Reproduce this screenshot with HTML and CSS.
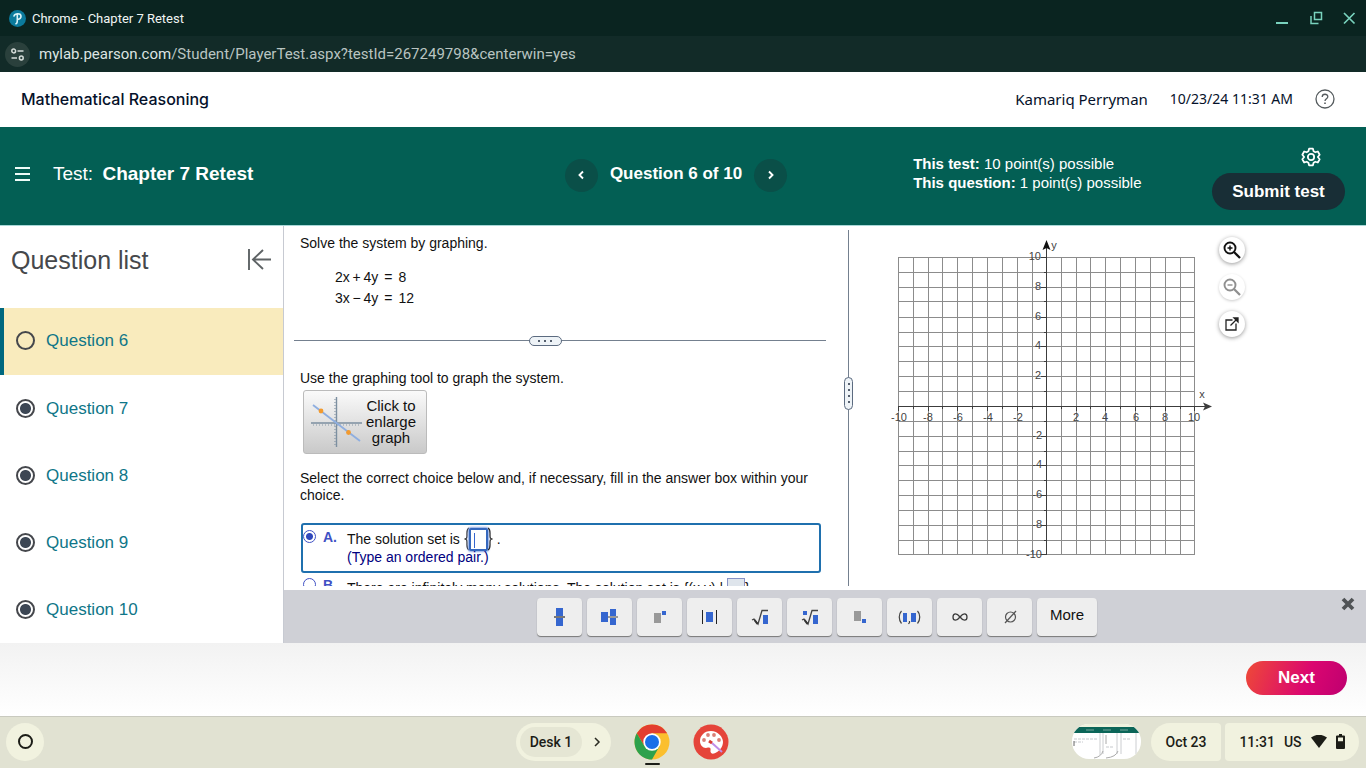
FILE: index.html
```html
<!DOCTYPE html>
<html lang="en">
<head>
<meta charset="utf-8">
<meta name="viewport" content="width=device-width, initial-scale=1">
<title>Chapter 7 Retest</title>
<link rel="stylesheet" href="styles.css">
</head>
<body>
<div class="titlebar">
  <svg width="17" height="17" viewBox="0 0 17 17" aria-hidden="true"><circle cx="8.500" cy="8.500" r="8.500" fill="#0b7a9c"/><path d="M5 6C6 3 12 3 12 6.300c0 2.200-1.500 3-3.500 3.200M8.300 4.500v6c0 2-.3 3-1.300 3.300" fill="none" stroke="#d9f2f7" stroke-width="1.600" stroke-linecap="round"/></svg>
  <span class="window-title">Chrome - Chapter 7 Retest</span>
  <div class="window-buttons">
    <button type="button" aria-label="Minimize"><svg width="14" height="14" viewBox="0 0 14 14"><path d="M0 12h12" stroke="#79d2bd" stroke-width="2"/></svg></button>
    <button type="button" aria-label="Restore"><svg width="14" height="14" viewBox="0 0 14 14" fill="none" stroke="#79d2bd" stroke-width="1.500"><path d="M5.500 1.500h7v7h-7zM2 5v7.500h7.500"/></svg></button>
    <button type="button" aria-label="Close window"><svg width="14" height="14" viewBox="0 0 14 14"><path d="M2 2l10.500 10.500M12.500 2L2 12.500" stroke="#79d2bd" stroke-width="1.700"/></svg></button>
  </div>
</div>
<div class="urlbar">
  <button type="button" class="site-info" aria-label="Site information"><svg width="13" height="13" viewBox="0 0 13 13" fill="none" stroke="#d5dcd9" stroke-width="1.500"><circle cx="2.700" cy="3" r="1.900"/><path d="M6.500 3H12.500M.5 10H6"/><circle cx="10.300" cy="10" r="1.900"/></svg></button>
  <span class="url"><span class="host">mylab.pearson.com</span>/Student/PlayerTest.aspx?testId=267249798&amp;centerwin=yes</span>
</div>

<header class="course-bar">
  <h1>Mathematical Reasoning</h1>
  <span class="student">Kamariq Perryman</span>
  <span class="timestamp">10/23/24 11:31 AM</span>
  <button type="button" class="help" aria-label="Help"><svg width="20" height="20" viewBox="0 0 20 20" fill="none" stroke="#555b5e" stroke-width="1.300"><circle cx="10" cy="10" r="9"/><path d="M7.200 8C7.200 4.300 12.800 4.500 12.800 7.700c0 2-2.800 2.200-2.800 4.300"/><path d="M10 13.500v1.500" stroke-width="1.600"/></svg></button>
</header>

<section class="test-bar">
  <div class="test-name">
    <button type="button" class="menu" aria-label="Menu"><svg width="15" height="14" viewBox="0 0 15 14"><path d="M0 1h15M0 7h15M0 13h15" stroke="#eefcf8" stroke-width="2"/></svg></button>
    <p>Test: <strong>Chapter 7 Retest</strong></p>
  </div>
  <nav class="pager">
    <button type="button" aria-label="Previous question"><svg width="8" height="10" viewBox="0 0 8 10"><path d="M6 1.500L2.500 5 6 8.500" fill="none" stroke="#fff" stroke-width="1.900"/></svg></button>
    <strong>Question 6 of 10</strong>
    <button type="button" aria-label="Next question"><svg width="8" height="10" viewBox="0 0 8 10"><path d="M2 1.500L5.500 5 2 8.500" fill="none" stroke="#fff" stroke-width="1.900"/></svg></button>
  </nav>
  <div class="test-side">
    <p class="points"><strong>This test:</strong> 10 point(s) possible<br><strong>This question:</strong> 1 point(s) possible</p>
    <div class="test-actions">
      <button type="button" class="gear" aria-label="Settings"><svg width="20" height="20" viewBox="0 0 24 24" fill="none" stroke="#fff" stroke-width="2.100" stroke-linejoin="round"><path d="M9.700 2h4.600l.8 3.100 2.100 1.200 3-.9 2.200 3.900L20.200 12l2.200 2.700-2.200 3.900-3-.9-2.100 1.200-.8 3.100H9.700l-.8-3.100-2.100-1.200-3 .9-2.200-3.900L3.800 12 1.600 9.300l2.200-3.900 3 .9 2.100-1.200z"/><circle cx="12" cy="12" r="3.800"/></svg></button>
      <button type="button" class="submit">Submit test</button>
    </div>
  </div>
</section>

<main class="player">
  <aside class="question-list">
    <div class="list-head">
      <h2>Question list</h2>
      <button type="button" aria-label="Collapse question list"><svg width="24" height="22" viewBox="0 0 24 22" fill="none" stroke="#5e6365" stroke-width="1.900"><path d="M2 0v21M24 10.500H6M16 1L6 10.500 16 20"/></svg></button>
    </div>
    <ul>
      <li class="current"><i class="status"></i><a href="#q6">Question 6</a></li>
      <li><i class="status seen"></i><a href="#q7">Question 7</a></li>
      <li><i class="status seen"></i><a href="#q8">Question 8</a></li>
      <li><i class="status seen"></i><a href="#q9">Question 9</a></li>
      <li><i class="status seen"></i><a href="#q10">Question 10</a></li>
    </ul>
  </aside>

  <div class="workspace">
    <div class="panes">
      <article class="problem">
        <p>Solve the system by graphing.</p>
        <div class="equations">
          <span>2x&thinsp;+&thinsp;4y</span><span>=</span><span>8</span>
          <span>3x&thinsp;&minus;&thinsp;4y</span><span>=</span><span>12</span>
        </div>
        <div class="divider"><button type="button" aria-label="Resize"><i></i><i></i><i></i></button></div>
        <p>Use the graphing tool to graph the system.</p>
        <button type="button" class="enlarge">
          <svg width="51" height="50" viewBox="0 0 51 50" aria-hidden="true"><path d="M0 26h51M25.500 0v50" stroke="#7c8fa0" stroke-width="1.400"/><path d="M2 28h48M24 2v47" stroke="#8797a6" stroke-width="1.200" stroke-dasharray="1 2"/><path d="M2 8l47 36" stroke="#8eaee0" stroke-width="1.800"/><circle cx="10" cy="14" r="2.400" fill="#f29a2e"/><circle cx="37.500" cy="35.500" r="2.400" fill="#f29a2e"/></svg>
          <span>Click to<br>enlarge<br>graph</span>
        </button>
        <p class="instruction">Select the correct choice below and, if necessary, fill in the answer box within your choice.</p>
        <div class="choice selected">
          <input type="radio" name="choice" id="choice-a" checked>
          <label class="letter" for="choice-a">A.</label>
          <div class="choice-text">
            <p class="answer-line">The solution set is <span class="set"><svg width="5" height="24" viewBox="0 0 5 24" fill="none" stroke="#222" stroke-width="1.200"><path d="M5 1C2.500 2 3 5 3 8s0 3.500-2.500 4C3 12.500 3 13 3 16s-.5 6 2 7"/></svg><input type="text" class="answer" aria-label="Solution set"><svg width="5" height="24" viewBox="0 0 5 24" fill="none" stroke="#222" stroke-width="1.200"><path d="M0 1c2.500 1 2 4 2 7s0 3.500 2.500 4C2 12.500 2 13 2 16s.5 6-2 7"/></svg></span><span>.</span></p>
            <p class="hint">(Type an ordered pair.)</p>
          </div>
        </div>
        <div class="choice">
          <input type="radio" name="choice" id="choice-b">
          <label class="letter" for="choice-b">B.</label>
          <p class="choice-text second">There are infinitely many solutions. The solution set is {(x,y) | <input type="text" class="pending" aria-label="Equation">}.</p>
        </div>
      </article>

      <div class="splitter"><button type="button" aria-label="Resize panes"><i></i><i></i><i></i><i></i></button></div>

      <section class="graph">
        <svg class="plane" width="339" height="330" viewBox="0 0 339 330" role="img" aria-label="Coordinate plane">
          <path shape-rendering="crispEdges" fill="none" stroke="#8c8c8c" d="M18.500 23V321M33.500 23V321M48.500 23V321M62.500 23V321M77.500 23V321M92.500 23V321M107.500 23V321M122.500 23V321M137.500 23V321M152.500 23V321M181.500 23V321M196.500 23V321M210.500 23V321M225.500 23V321M240.500 23V321M255.500 23V321M270.500 23V321M285.500 23V321M300.500 23V321M314.500 23V321M18 23.500H315M18 38.500H315M18 53.500H315M18 67.500H315M18 83.500H315M18 98.500H315M18 112.500H315M18 127.500H315M18 142.500H315M18 157.500H315M18 187.500H315M18 202.500H315M18 217.500H315M18 231.500H315M18 246.500H315M18 261.500H315M18 276.500H315M18 291.500H315M18 306.500H315M18 320.500H315"/>
          <g stroke="#3c3c3c" fill="none" shape-rendering="crispEdges">
            <path d="M166.500 14V321M18 172.500H326"/>
            <path d="M18.500 172v5M33.500 172v3M48.500 172v5M62.500 172v3M77.500 172v5M92.500 172v3M107.500 172v5M122.500 172v3M137.500 172v5M152.500 172v3M181.500 172v3M196.500 172v5M210.500 172v3M225.500 172v5M240.500 172v3M255.500 172v5M270.500 172v3M285.500 172v5M300.500 172v3M314.500 172v5M161 23.500h5M164 38.500h3M161 53.500h5M164 67.500h3M161 83.500h5M164 98.500h3M161 112.500h5M164 127.500h3M161 142.500h5M164 157.500h3M164 187.500h3M161 202.500h5M164 217.500h3M161 231.500h5M164 246.500h3M161 261.500h5M164 276.500h3M161 291.500h5M164 306.500h3M161 320.500h5"/>
          </g>
          <path d="M166.500 6l4 10-4-2-4 2z" fill="#111"/>
          <path d="M332 172.500l-9 4 2-4-2-4z" fill="#3c3c3c"/>
          <g class="ticks y-ticks"><text x="161" y="26">10</text><text x="161" y="56">8</text><text x="161" y="86">6</text><text x="161" y="115">4</text><text x="161" y="145">2</text><text x="162" y="205">-2</text><text x="162" y="234">-4</text><text x="162" y="264">-6</text><text x="162" y="294">-8</text><text x="162" y="324">-10</text></g>
          <g class="ticks x-ticks"><text x="19" y="187">-10</text><text x="48" y="187">-8</text><text x="78" y="187">-6</text><text x="108" y="187">-4</text><text x="138" y="187">-2</text><text x="196" y="187">2</text><text x="225" y="187">4</text><text x="256" y="187">6</text><text x="285" y="187">8</text><text x="314" y="187">10</text><text x="174" y="15">y</text><text x="322" y="164">x</text></g>
        </svg>
        <div class="graph-tools">
          <button type="button" aria-label="Zoom in"><svg width="18" height="18" viewBox="0 0 18 18" fill="none" stroke="#111"><circle cx="7" cy="7" r="5.500" stroke-width="1.900"/><path d="M11 11l6 6" stroke-width="2.300"/><path d="M4.500 7h5M7 4.500v5" stroke-width="1.400"/></svg></button>
          <button type="button" class="off" aria-label="Zoom out"><svg width="18" height="18" viewBox="0 0 18 18" fill="none" stroke="#8f8f8f"><circle cx="7" cy="7" r="5.500" stroke-width="1.900"/><path d="M11 11l6 6" stroke-width="2.300"/><path d="M4.500 7h5" stroke-width="1.400"/></svg></button>
          <button type="button" aria-label="Open in new window"><svg width="14" height="14" viewBox="0 0 14 14" fill="none" stroke="#222" stroke-width="1.300"><path d="M7.500 3H1v10h10V6.500M5.500 8.500L12 2"/><path d="M9 1h4v4z" fill="#222"/></svg></button>
        </div>
      </section>
    </div>

    <div class="palette">
      <div class="keys">
        <button type="button" aria-label="Fraction"><svg width="28" height="24" viewBox="0 0 28 24"><path d="M10 3h7v8h-7zM10 13h7v8h-7z" fill="#3566cf"/><path d="M8 12h11" stroke="#777" stroke-width="2"/></svg></button>
        <button type="button" aria-label="Mixed number"><svg width="28" height="24" viewBox="0 0 28 24"><path d="M5 7h7v10H5zM14 4h6v7h-6zM14 13h6v7h-6z" fill="#3566cf"/><path d="M12 12h10" stroke="#999" stroke-width="2"/></svg></button>
        <button type="button" aria-label="Exponent"><svg width="28" height="24" viewBox="0 0 28 24"><path d="M8 8h7v10H8z" fill="#999"/><path d="M16 6h4v4h-4z" fill="#3566cf"/></svg></button>
        <button type="button" aria-label="Absolute value"><svg width="28" height="24" viewBox="0 0 28 24"><path d="M10 7h7v10h-7z" fill="#3566cf"/><path d="M6.500 5v14M20.500 5v14" stroke="#222"/></svg></button>
        <button type="button" aria-label="Square root"><svg width="28" height="24" viewBox="0 0 28 24"><path d="M17 10h5v9h-5z" fill="#3566cf"/><path d="M6 15l2-1 4 5 4-13.500h6" fill="none" stroke="#444" stroke-width="1.300"/><path d="M8.500 15l3 4" stroke="#333" stroke-width="2"/></svg></button>
        <button type="button" aria-label="Nth root"><svg width="28" height="24" viewBox="0 0 28 24"><path d="M17 10h5v9h-5zM7 6h4v4H7z" fill="#3566cf"/><path d="M6 15l2-1 4 5 4-13.500h6" fill="none" stroke="#444" stroke-width="1.300"/><path d="M8.500 15l3 4" stroke="#333" stroke-width="2"/></svg></button>
        <button type="button" aria-label="Subscript"><svg width="28" height="24" viewBox="0 0 28 24"><path d="M8 6h7v10H8z" fill="#999"/><path d="M16 14h4v4h-4z" fill="#3566cf"/></svg></button>
        <button type="button" aria-label="Ordered pair"><svg width="28" height="24" viewBox="0 0 28 24"><path d="M7 8h4v9H7zM15 8h5v9h-5z" fill="#3566cf"/><path d="M5.500 6c-3 3-3 9 0 12.500M21.500 6c3 3 3 9 0 12.500M13.500 16v1.500L12.500 19" fill="none" stroke="#444" stroke-width="1.200"/></svg></button>
        <button type="button" aria-label="Infinity"><svg width="28" height="24" viewBox="0 0 28 24"><path d="M14 12c-2-2.500-3-3.200-4.500-3.200S7 10 7 12s1 3.200 2.500 3.200S12 14.500 14 12s3-3.200 4.500-3.200S21 10 21 12s-1 3.200-2.500 3.200S16 14.500 14 12z" fill="none" stroke="#3c3c3c" stroke-width="1.300"/></svg></button>
        <button type="button" aria-label="Empty set"><svg width="28" height="24" viewBox="0 0 28 24" fill="none" stroke="#555" stroke-width="1.200"><circle cx="14.500" cy="12" r="5"/><path d="M9 18L20 6"/></svg></button>
        <button type="button" class="more">More</button>
      </div>
      <button type="button" class="close" aria-label="Close palette"><svg width="14" height="14" viewBox="0 0 14 14"><path d="M2 2l10 10M12 2L2 12" stroke="#505356" stroke-width="3.800"/></svg></button>
    </div>
  </div>
</main>

<footer class="next-bar"><button type="button">Next</button></footer>

<div class="shelf">
  <button type="button" class="launcher" aria-label="Launcher"><i></i></button>
  <div class="shelf-apps">
    <div class="desk"><button type="button" class="desk-name">Desk 1</button><button type="button" class="desk-next" aria-label="Next desk"><svg width="8" height="10" viewBox="0 0 8 10"><path d="M2 1l4 4-4 4" fill="none" stroke="#2a2b22" stroke-width="1.500"/></svg></button></div>
    <button type="button" class="app running" aria-label="Chrome"><svg width="36" height="36" viewBox="-18 -18 36 36"><circle r="17.500" fill="#fbbf2e"/><path d="M-15.200-8.700A17.500 17.500 0 0 1 15.200-8.700H0L-7.500 4.300z" fill="#e33e2f"/><path d="M-15.200-8.700A17.500 17.500 0 0 0 0 17.500L7.500 4.300H-7.500z" fill="#2da14c"/><circle r="8.700" fill="#fff"/><circle r="7" fill="#1a6fe8"/></svg></button>
    <button type="button" class="app" aria-label="Canvas"><svg width="36" height="36" viewBox="-18 -18 36 36"><circle r="17.500" fill="#e5443a"/><path d="M0-11C-7-11-11-6-11-1s4 8 8 6.500c2-.5 3 .5 2.500 3C-1 11 1 12 3 11.500 8 10 12 5 12 0S7-11 0-11z" fill="#fff"/><g fill="#d98078"><circle cx="-7" cy="-2" r="1.900"/><circle cx="-3" cy="-7" r="1.900"/><circle cx="3" cy="-7" r="1.900"/><circle cx="8" cy="-2" r="1.900"/></g><path d="M1 1l10 9" stroke="#c08de8" stroke-width="2"/><path d="M-2-1l3 2" stroke="#d83b34" stroke-width="3"/></svg></button>
  </div>
  <div class="tray">
    <svg class="thumb" width="69" height="35" viewBox="0 0 69 35" aria-hidden="true"><clipPath id="pill"><rect width="69" height="35" rx="17"/></clipPath><g clip-path="url(#pill)"><path d="M0 0h69v35H0z" fill="#fff"/><path d="M0 0h69v3H0z" fill="#eef1dd"/><path d="M0 3h69v6H0z" fill="#0b6558"/><path d="M14 6h8M31 6h8M48 6h8" stroke="#77a59a"/><path d="M2 15h23M51 15h8M2 18h9M34 23h8" stroke="#c6c9cd" stroke-dasharray="3 1"/><path d="M28 9v22M31 9v21M45 9v21M49 9v21M64 9v21" stroke="#ccced1"/><path d="M34 11v9M46 27Q44 33 34 34M31 27Q29 33 22 34" fill="none" stroke="#aaa"/><path d="M2 17v5" stroke="#666"/></g></svg>
    <button type="button" class="date">Oct 23</button>
    <button type="button" class="clock"><span>11:31</span><span>US</span><svg width="16" height="13" viewBox="0 0 16 13"><path d="M0 2.500Q8-3 16 2.500L8 13z" fill="#1c1d17"/></svg><svg width="9" height="15" viewBox="0 0 9 15"><path d="M3 0h3v1.500h2q1 0 1 1V14q0 1-1 1H1q-1 0-1-1V2.500q0-1 1-1h2zM2 3.500v3.800h5V3.500z" fill="#1c1d17" fill-rule="evenodd"/></svg></button>
  </div>
</div>
</body>
</html>
```
FILE: styles.css
```css
* { box-sizing: border-box; }
body {
  margin: 0;
  height: 100vh;
  display: flex;
  flex-direction: column;
  overflow: hidden;
  font: 14px/17px "Liberation Sans", Arial, sans-serif;
  color: #111;
  background: #fff;
}
h1, h2, p, ul { margin: 0; padding: 0; font-weight: normal; }
button {
  display: flex;
  align-items: center;
  justify-content: center;
  padding: 0;
  border: 0;
  background: none;
  font: inherit;
  color: inherit;
  cursor: pointer;
}
svg { display: block; flex: none; }

/* Browser window */
.titlebar, .urlbar {
  flex: 0 0 36px;
  display: flex;
  align-items: center;
  font-family: Roboto, sans-serif;
}
.titlebar { gap: 6px; padding: 0 10px 0 9px; background: #0a2420; color: #f0f5f3; }
.window-title { flex: 1; font-size: 13px; }
.window-buttons { display: flex; gap: 19px; }
.urlbar { gap: 9px; padding: 0 5px; background: #122b28; color: #b9c4c1; font-size: 15px; }
.url .host { color: #dde4e2; }
.site-info { width: 25px; height: 25px; border-radius: 50%; background: #2a403c; }

/* Course header */
.course-bar {
  flex: 0 0 55px;
  display: flex;
  align-items: center;
  gap: 22px;
  padding: 0 31px 2px 21px;
  color: #05112a;
  font: 15px/24px "Noto Sans", sans-serif;
}
.course-bar h1 { flex: 1; font: 500 16px/24px Inter, sans-serif; }
.timestamp { font-size: 14px; }

/* Test header */
.test-bar {
  flex: 0 0 99px;
  display: grid;
  grid-template-columns: minmax(0, 1fr) auto minmax(0, 1fr);
  align-items: center;
  padding-right: 14px;
  background: #035f54;
  border-bottom: 1px solid #a9d8d8;
  color: #fff;
}
.test-name { display: flex; align-items: center; gap: 23px; padding: 0 0 5px 15px; font-size: 19px; line-height: 24px; }
.test-name strong { margin-left: 4px; }
.pager { display: flex; align-items: center; gap: 12px; padding-bottom: 2px; font-size: 17px; line-height: 24px; }
.pager strong { padding-bottom: 2px; }
.pager button { width: 33px; height: 33px; border-radius: 50%; background: #0a4f48; }
.test-side { display: flex; justify-content: space-between; padding: 0 7px 0 126px; }
.points { align-self: center; padding-bottom: 6px; font-size: 15px; line-height: 19px; }
.test-actions { display: flex; flex-direction: column; align-items: flex-end; gap: 6px; padding-top: 4px; }
.gear { margin-right: 24px; }
.submit { width: 133px; height: 37px; border-radius: 19px; background: #182e36; font-weight: bold; font-size: 17px; }

/* Player */
.player { flex: 1; display: flex; min-height: 0; }
.question-list { flex: 0 0 284px; border-right: 1px solid #c7cad2; overflow: hidden; }
.list-head { display: flex; justify-content: space-between; align-items: center; height: 82px; padding: 0 12px 15px 11px; }
.list-head h2 { font-size: 25px; line-height: 28px; color: #46484b; }
.question-list ul { list-style: none; }
.question-list li { display: flex; align-items: center; gap: 11px; height: 67px; padding-left: 16px; font-size: 17px; line-height: 20px; }
.question-list .current { padding: 0 0 2px 12px; border-left: 4px solid #00687f; background: #f9ebbd; }
.question-list a { color: #0f7688; text-decoration: none; }
.status { width: 19px; height: 19px; border: 2px solid #45474c; border-radius: 50%; }
.status.seen { background: radial-gradient(circle, #3c4654 5px, #fff 6px); }

.workspace { flex: 1; display: flex; flex-direction: column; min-width: 0; }
.panes { flex: 1; display: flex; min-height: 0; margin-bottom: 4px; overflow: hidden; }
.problem { flex: 0 0 564px; padding: 9px 22px 0 10px; overflow: hidden; }
.problem > p { padding-left: 6px; }
.equations {
  display: grid;
  grid-template-columns: auto auto auto;
  justify-content: start;
  column-gap: 6px;
  margin: 15px 0 31px 41px;
  line-height: 21px;
}
.divider { display: flex; justify-content: center; height: 1px; margin-bottom: 29px; background: #74808f; align-items: center; padding-right: 30px; }
.divider button, .splitter button { flex: none; gap: 4px; border: 1px solid #5c6b80; background: #eef3f7; }
.divider button { width: 33px; height: 10px; border-radius: 5px; }
.divider i, .splitter i { width: 2px; height: 2px; background: #555f6e; }
.enlarge {
  gap: 4px;
  width: 124px;
  height: 64px;
  margin: 3px 0 16px 9px;
  padding: 0 3px 1px 0;
  border: 1px solid #bbb;
  border-radius: 3px;
  background: linear-gradient(#fafafa, #c9c9c9);
  line-height: 16px;
}
.enlarge span { font-size: 15px; }
.instruction { margin-bottom: 19px; }
.choice {
  display: flex;
  width: 520px;
  height: 50px;
  margin-left: 7px;
  padding-top: 3px;
  border: 2px solid transparent;
  border-radius: 3px;
}
.choice.selected { padding-top: 5px; border-color: #1f70ae; }
.choice > input {
  appearance: none;
  flex: none;
  width: 13px;
  height: 13px;
  margin: 0;
  border: 1px solid #3f51c4;
  border-radius: 50%;
}
.choice > input:checked { background: radial-gradient(circle, #3048bb 3px, #fff 4px); }
.letter { width: 24px; margin-left: 7px; line-height: 14px; font-weight: bold; color: #3f51c4; }
.answer-line { display: flex; align-items: center; gap: 4px; line-height: 18px; }
.set { display: flex; align-items: center; height: 18px; }
.answer { width: 19px; height: 23px; padding: 0; border: 2px solid #3668bd; border-radius: 2px; background: linear-gradient(#3566cf, #3566cf) 3px 3px / 1px 15px no-repeat #fff; box-shadow: 0 0 2px 1px #86a4e4; }
.hint { color: #000080; line-height: 18px; }
.second { padding-top: 2px; white-space: nowrap; }
.pending { width: 18px; height: 20px; margin: -3px 0 0; padding: 0; border: 1px solid #8792c6; background: #dfe5ec; vertical-align: middle; }

.splitter { flex: 0 0 9px; display: flex; align-items: center; justify-content: center; margin: 4px 0 0 -4px; background: linear-gradient(#74808f, #74808f) center / 1px 100% no-repeat; }
.splitter button { flex-direction: column; width: 9px; height: 33px; border-radius: 5px; margin-bottom: 30px; }
.graph { flex: 1; display: flex; align-items: flex-start; padding: 8px 0 0 27px; }
.ticks { font-size: 11px; fill: #444; }
.y-ticks { text-anchor: end; }
.x-ticks { text-anchor: middle; }
.graph-tools { display: flex; flex-direction: column; gap: 11px; padding-top: 3px; }
.graph-tools button { width: 26px; height: 26px; border-radius: 50%; background: #fff; box-shadow: 0 1px 4px #999; }
.graph-tools .off { box-shadow: 0 1px 3px #ccc; }

.palette { flex: 0 0 53px; display: flex; align-items: flex-start; padding: 8px 11px 0 9px; background: #cfd0d6; }
.keys { display: flex; gap: 5px; margin: 0 auto; }
.keys button { width: 45px; height: 38px; border-radius: 4px; background: #eee; box-shadow: 0 1px 1px #777; }
.keys .more { width: 60px; padding-bottom: 5px; font-size: 15px; }
.close { width: 14px; height: 12px; }

.next-bar { flex: 0 0 73px; display: flex; justify-content: flex-end; padding: 18px 19px; background: linear-gradient(#f2f2f2, #fff); }
.next-bar button { width: 101px; height: 34px; padding-bottom: 2px; border-radius: 17px; background: linear-gradient(110deg, #ee4a37, #db0670 60%, #be0070); color: #fff; font-weight: bold; font-size: 17px; }

/* System shelf */
.shelf {
  flex: 0 0 52px;
  display: grid;
  grid-template-columns: 1fr auto 1fr;
  align-items: center;
  padding: 0 7px 2px 6px;
  border-top: 1px solid #c9cabf;
  background: #e1e2d2;
  color: #1c1d17;
  font: 500 14px/20px Roboto, sans-serif;
}
.launcher { width: 38px; height: 38px; border-radius: 50%; background: #f1f2df; }
.launcher i { width: 15px; height: 15px; border: 2px solid #1c1d17; border-radius: 50%; }
.shelf-apps { display: flex; align-items: center; gap: 23px; margin-right: 120px; }
.desk { display: flex; align-items: center; width: 95px; height: 38px; padding-left: 4px; border-radius: 19px; background: #f1f2df; }
.desk-name { width: 62px; height: 30px; border-radius: 15px; background: #e5e6d4; }
.desk-next { flex: 1; height: 30px; }
.app { position: relative; height: 38px; border-radius: 50%; }
.running::after { content: ""; position: absolute; left: 11px; bottom: -4px; width: 15px; height: 2px; background: #1c1d17; border-radius: 1px; }
.tray { display: flex; align-items: center; justify-content: flex-end; gap: 4px; }
.thumb { margin-right: 6px; }
.date, .clock { height: 38px; background: #f1f2df; }
.date { width: 70px; border-radius: 19px 4px 4px 19px; }
.clock { width: 134px; gap: 9px; border-radius: 4px 19px 19px 4px; }
```
